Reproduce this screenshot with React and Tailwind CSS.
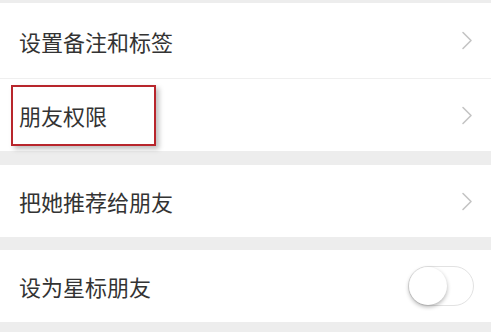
import React from "react";

function Chevron() {
  return (
    <svg width="12" height="19" viewBox="0 0 12 19" className="shrink-0">
      <path d="M2 1.5 L10 9.5 L2 17.5" fill="none" stroke="#c4c4c4" strokeWidth="1.6" strokeLinecap="round" strokeLinejoin="round" />
    </svg>
  );
}

function Row({ label, right, h = "h-[72px]", extra }) {
  return (
    <div className={`relative flex items-center justify-between bg-white pl-[19px] pr-[18px] ${h}`}>
      <span className="text-[22px] leading-none text-[#333333]">{label}</span>
      {right}
      {extra}
    </div>
  );
}

export default function App() {
  return (
    <div
      className="w-[491px] h-[332px] overflow-hidden bg-[#ededed] flex flex-col"
      style={{ fontFamily: '"Noto Sans CJK SC", "Noto Sans", sans-serif' }}
    >
      <div className="h-[3px] shrink-0" />
      <Row label="设置备注和标签" h="h-[75px]" right={<Chevron />} />
      <div className="h-px bg-[#efefef] shrink-0" />
      <Row
        label="朋友权限"
        right={<Chevron />}
        extra={
          <div className="absolute left-[11px] top-[6px] w-[145px] h-[61px] border-2 border-[#b8262c] shadow-[3px_3px_5px_rgba(0,0,0,0.25)]" />
        }
      />
      <div className="h-[14px] shrink-0" />
      <Row label="把她推荐给朋友" right={<Chevron />} />
      <div className="h-[13px] shrink-0" />
      <Row
        label="设为星标朋友"
        right={
          <div className="relative w-[66px] h-[40px] rounded-full border border-[#e2e2e2] bg-white mr-[-1px]">
            <div className="absolute left-0 top-0 w-[38px] h-[38px] rounded-full bg-white shadow-[0_2px_4px_rgba(0,0,0,0.3)]" />
          </div>
        }
      />
    </div>
  );
}
